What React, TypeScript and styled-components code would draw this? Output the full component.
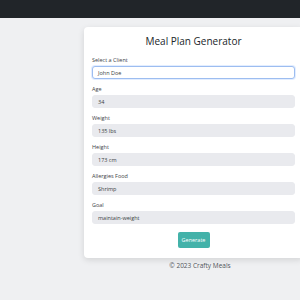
import React from "react";
import styled, { createGlobalStyle } from "styled-components";

const GlobalStyle = createGlobalStyle`
  html, body {
    margin: 0;
    padding: 0;
    background: #eff0f2;
    overflow: hidden;
    font-family: "Open Sans", "Liberation Sans", sans-serif;
  }
`

const Page = styled.div`
  width: 400px;
  min-height: 300px;
`

const Navbar = styled.div`
  height: 18px;
  background-color: #212529;
`

const Main = styled.div`
  padding: 9px 0 0 84px;
`

const Card = styled.div`
  width: 219px;
  box-sizing: border-box;
  background: #ffffff;
  border-radius: 4px;
  padding: 8px 8px 10px 8px;
  box-shadow: 0 2px 6px rgba(0, 0, 0, 0.12);
`

const Title = styled.h2`
  margin: 0 0 10px 0;
  text-align: center;
  font-size: 10px;
  font-weight: 400;
  line-height: 12px;
  color: #212529;
`

const Field = styled.div`
  display: flex;
  flex-direction: column;
  margin-bottom: 7px;
`

const Label = styled.label`
  font-size: 5.5px;
  line-height: 7px;
  color: #3d4348;
  margin-bottom: 2px;
`

const Input = styled.div<{ $active?: boolean }>`
  height: 13px;
  box-sizing: border-box;
  border-radius: 3px;
  padding: 0 5px;
  display: flex;
  align-items: center;
  font-size: 5.5px;
  color: #3a3f44;
  background: ${(p) => (p.$active ? "#ffffff" : "#e9eaee")};
  border: 1px solid ${(p) => (p.$active ? "#9dbdf0" : "#e9eaee")};
  box-shadow: ${(p) => (p.$active ? "0 0 0 1px rgba(13, 110, 253, 0.12)" : "none")};
`

const Actions = styled.div`
  display: flex;
  justify-content: center;
  padding-top: 1px;
`

const Button = styled.button`
  width: 32px;
  height: 16px;
  padding: 0;
  border: none;
  border-radius: 2px;
  background: #43b2a9;
  color: #ffffff;
  font-family: inherit;
  font-size: 5.5px;
`

const Footer = styled.div`
  text-align: center;
  padding-top: 4px;
  font-size: 6.5px;
  line-height: 8px;
  color: #50555a;
`

const fields = [
  { label: "Select a Client", value: "John Doe", active: true },
  { label: "Age", value: "34" },
  { label: "Weight", value: "135 lbs" },
  { label: "Height", value: "173 cm" },
  { label: "Allergies Food", value: "Shrimp" },
  { label: "Goal", value: "maintain-weight" },
];

export default function App() {
  return (
    <Page>
      <GlobalStyle />
      <Navbar />
      <Main>
        <Card>
          <Title>Meal Plan Generator</Title>
          {fields.map((f) => (
            <Field key={f.label}>
              <Label>{f.label}</Label>
              <Input $active={f.active}>{f.value}</Input>
            </Field>
          ))}
          <Actions>
            <Button>Generate</Button>
          </Actions>
        </Card>
      </Main>
      <Footer>© 2023 Crafty Meals</Footer>
    </Page>
  );
}
